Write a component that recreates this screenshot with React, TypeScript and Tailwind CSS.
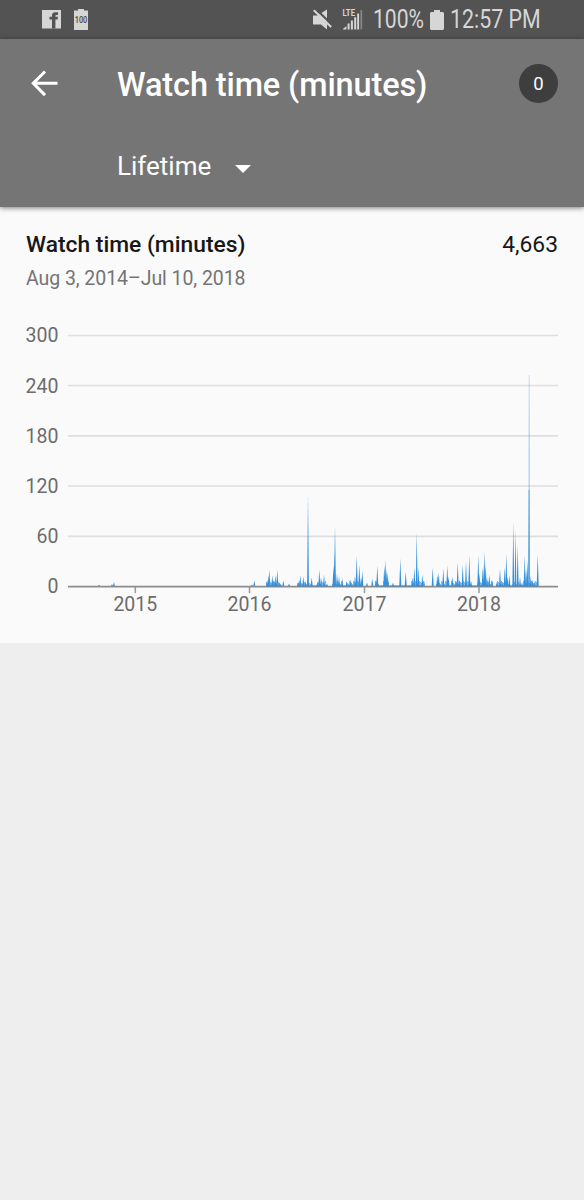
const spikes: [number, number][] = [
  [99, 1], [112, 1.5], [114, 3.5], [254.3, 5], [252, 1],
  [267, 5], [268.3, 10], [269.3, 16], [272.3, 10], [274, 6], [275.7, 10], [277.3, 16], [279.7, 3], [283.3, 5], [289, 2],
  [298.5, 4], [300.3, 10], [303.3, 9], [305.5, 5], [311.7, 8],
  [317.5, 4], [319.3, 16], [321, 8], [324, 11], [327, 2], [333.5, 20], [334.5, 33], [337, 12], [339, 9], [342.3, 7], [346.7, 4],
  [350.7, 6], [355, 10], [356.7, 30], [359.3, 21], [361, 8], [362.3, 15], [367, 3], [372.3, 7], [376, 6], [377.3, 20],
  [384.3, 20], [385.3, 26], [386.3, 16], [387.7, 13], [393, 3], [400.3, 27], [405.7, 14], [412.7, 8], [414.3, 18],
  [418.3, 18], [422.3, 11], [424, 5], [432.7, 18], [437.3, 11], [438.7, 13], [443.3, 17], [447.3, 20], [448.5, 9], [452.3, 9],
  [456, 5], [457.7, 23], [459.5, 6], [462.7, 21], [466, 24], [469.3, 30], [471, 5],
  [478.3, 30], [479.3, 12], [482.7, 18], [484, 22], [484.7, 34], [485.7, 20], [487, 8], [489.3, 11], [492, 6],
  [497, 4], [500, 17], [502, 4], [504.7, 18], [506.3, 32], [507.3, 9], [509.3, 10], [520, 8], [522, 3],
  [524.7, 30], [526, 15], [527.3, 25], [530.7, 9], [532.5, 6], [534.5, 4], [537.7, 31],
];
const peaks: [number, number][] = [
  [308, 91], [335, 60], [416.7, 53], [513.3, 64], [515.5, 54], [517.7, 40],
];
const activity: [number, number][] = [
  [266, 281], [297, 312], [318, 326], [332, 342], [346, 363], [375, 379], [383, 389], [411, 424],
  [436, 449], [451, 471], [477, 493], [496, 510], [512, 519], [523, 538],
];
const days = activity.flatMap(([from, to]) =>
  Array.from({ length: to - from }, (_, i) => [from + i, 2 + ((i * 7 + from) % 4)] as const),
);
const gridRows = [335.5, 385.5, 435.8, 486, 536.3];
const labels = [300, 240, 180, 120, 60, 0];
const years: [number, number][] = [[2015, 135.3], [2016, 249.5], [2017, 364.5], [2018, 479]];

function StatusBar() {
  return (
    <div className="flex h-[39px] items-center bg-[#535353] text-[#d6d6d6]">
      <svg className="ml-[42px] size-[19px] shrink-0" viewBox="0 0 19 19">
        <path fill="currentColor" d="M0 0h19v18.5H0z" />
        <path fill="#535353" d="M10 18.5V9.6H7.5V6.7H10V5.6c0-2.2 1.2-3.3 3.3-3.3H16v2.6h-1.4c-.9 0-1.2.4-1.2 1.1v.7H16l-.4 2.9h-2.2v8.9z" />
      </svg>
      <svg className="ml-[13px] h-[21px] w-[14px] shrink-0" viewBox="0 0 14 21">
        <path fill="currentColor" d="M0 1.5h4V0h6v1.5h4V21H0z" />
        <text x="7" y="14" textAnchor="middle" fontFamily="Roboto, sans-serif" fontSize="8.2" fontWeight="500" fill="#474747" textLength="12.6" lengthAdjust="spacingAndGlyphs">100</text>
      </svg>
      <svg className="ml-[225px] h-[22px] w-[19px] shrink-0" viewBox="0 0 19 22">
        <path fill="currentColor" d="M0 6.5h4.5l9.5-6v20L8 15.5H0z" />
        <path stroke="#535353" strokeWidth="2.2" d="M2 -.8l18 17.5" />
        <path stroke="currentColor" strokeWidth="2.1" d="M.8 1.3l17.4 16.7" />
      </svg>
      <svg className="ml-[10px] h-[22px] w-[22px] shrink-0" viewBox="0 0 22 22">
        <text x="0.5" y="7.2" fontFamily="Roboto, sans-serif" fontSize="8.6" fontWeight="700" fill="currentColor" textLength="12.5" lengthAdjust="spacingAndGlyphs">LTE</text>
        <path fill="currentColor" d="M1 20.5v-.5l3.4-3v3.5zM5.6 14.5h2v6h-2zM8.9 11.5h2v9h-2zM12.2 8.3h2v12.2h-2zM15.2 4.5h1.9v16h-1.9z" />
        <path fill="#858585" d="M18.4 1h1.8v19.5h-1.8z" />
      </svg>
      <div className="ml-[9px] w-[52px] shrink-0 pt-px text-[25px] leading-[30px]">
        <span className="inline-block origin-left scale-x-[0.845] whitespace-nowrap">100%</span>
      </div>
      <svg className="ml-[5px] h-[20px] w-[14px] shrink-0" viewBox="0 0 14 20">
        <path fill="currentColor" d="M1 2h3V0h6v2h3l1 1v16l-1 1H1l-1-1V3z" />
      </svg>
      <div className="ml-[6px] w-[96px] shrink-0 pt-px text-[25px] leading-[30px]">
        <span className="inline-block origin-left scale-x-[0.855] whitespace-nowrap">12:57 PM</span>
      </div>
    </div>
  );
}

function Header() {
  return (
    <header className="h-[168px] bg-[#757575] text-white shadow-[0_1px_5px_rgba(0,0,0,0.5)]">
      <div className="flex h-[90px] items-center pr-[26px] pl-[31px]">
        <svg className="mb-[2px] size-[27px] shrink-0" viewBox="0 0 27 27" fill="none" stroke="currentColor" strokeWidth="3">
          <path d="M14 1.5L2.3 13.3l11.7 11.8M2.3 13.3h24.2" />
        </svg>
        <h1 className="mt-[2px] ml-[59px] text-[32.5px] leading-[40px] font-medium tracking-[-0.12px] whitespace-nowrap">Watch time (minutes)</h1>
        <span className="mb-px ml-auto flex size-[39px] items-center justify-center rounded-full bg-[#3e3e3e] pt-[3px] text-[18.5px]">0</span>
      </div>
      <div className="flex h-[74px] items-center pl-[117px]">
        <span className="text-[26px] leading-[32px]">Lifetime</span>
        <svg className="mt-[6px] ml-[24px] h-[8px] w-[16px]" viewBox="0 0 16 8"><path fill="currentColor" d="M0 0h16L8 8z" /></svg>
      </div>
    </header>
  );
}

function Chart() {
  return (
    <svg className="block h-[323px] w-full" viewBox="0 320 584 323" fontFamily="Roboto, sans-serif" fontSize="19.5" fill="#6c6c6c">
      {gridRows.map((y) => <path key={y} d={`M68 ${y}H558`} stroke="#dedede" strokeWidth="1.7" />)}
      {labels.map((v, i) => <text key={v} x="58.5" y={342.3 + i * 50.2} textAnchor="end">{v}</text>)}
      <g fill="#3390dc">
        {days.map(([x, h]) => <path key={x} d={`M${x} 586V${586 - h}h.8V586z`} opacity=".75" />)}
        {spikes.map(([x, h]) => <path key={x} d={`M${x - 1} 586L${x} ${585.5 - h}L${x + 1} 586z`} />)}
        {peaks.map(([x, h]) => <path key={x} d={`M${x - 0.9} 586L${x} ${585 - h}L${x + 0.9} 586z`} />)}
        <path d="M528.8 375h.7l.3 80V586h-1.3V455z" opacity=".38" />
        <path d="M528.6 490h1l.5 96h-2.2z" opacity=".65" />
      </g>
      <path d="M68 586.7H558" stroke="#8c8c8c" strokeWidth="1.7" />
      <path d="M266 586h16M297 586h30M332 586h31M375 586h48M436 586h57M496 586h42" stroke="#4c83b3" />
      {years.map(([year, x]) => (
        <g key={year}>
          <path d={`M${x} 587v6`} stroke="#999" strokeWidth="1.5" />
          <text x={x} y="611.3" textAnchor="middle">{year}</text>
        </g>
      ))}
    </svg>
  );
}

export default function App() {
  return (
    <div className="min-h-screen w-full bg-[#eeeeee] font-['Roboto',sans-serif]">
      <StatusBar />
      <main className="flex h-[604px] flex-col bg-[#fafafa]">
        <Header />
        <div className="h-[113px] px-[26px] pt-[22px]">
          <div className="flex items-center justify-between text-[22.8px] leading-[32px] text-[#171717]">
            <h2 className="font-medium">Watch time (minutes)</h2>
            <span>4,663</span>
          </div>
          <p className="mt-[5px] text-[19.5px] leading-[26px] tracking-[-0.06px] text-[#747474]">Aug 3, 2014–Jul 10, 2018</p>
        </div>
        <Chart />
      </main>
    </div>
  );
}
